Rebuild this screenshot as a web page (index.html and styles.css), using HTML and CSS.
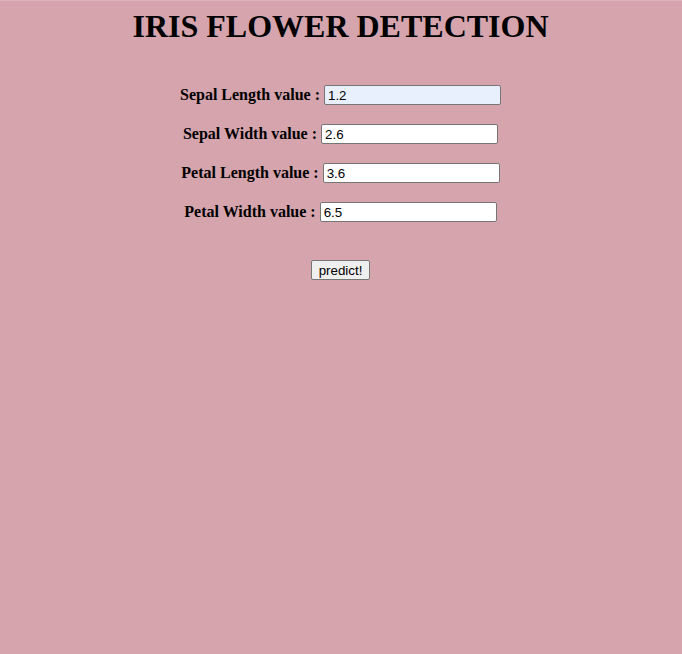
FILE: index.html
```html
<!DOCTYPE html>
<html>
<head>
<meta charset="utf-8">
<title>Iris Flower Detection</title>
<link rel="stylesheet" href="styles.css">
</head>
<body>
<h1 class="title">IRIS FLOWER DETECTION</h1>
<form class="form">
  <div class="row"><label class="label">Sepal Length value :</label><input class="field autofill" type="text" value="1.2"></div>
  <div class="row"><label class="label">Sepal Width value :</label><input class="field" type="text" value="2.6"></div>
  <div class="row"><label class="label">Petal Length value :</label><input class="field" type="text" value="3.6"></div>
  <div class="row"><label class="label">Petal Width value :</label><input class="field" type="text" value="6.5"></div>
  <button class="btn" type="button">predict!</button>
</form>
</body>
</html>
```
FILE: styles.css
```css
html, body {
  margin: 0;
  padding: 0;
  background: #d5a4ad;
  height: 100%;
}
body {
  border-top: 1px solid #dcb3ba;
  padding-top: 7px;
  padding-right: 1px;
  box-sizing: border-box;
  font-family: "Liberation Serif", "Times New Roman", serif;
  color: #000;
}
.title {
  margin: 0;
  text-align: center;
  font-size: 32px;
  font-weight: bold;
  line-height: 37px;
}
.form {
  margin-top: 40px;
  display: flex;
  flex-direction: column;
  align-items: center;
  gap: 19px;
}
.row {
  display: flex;
  align-items: center;
  gap: 4px;
  height: 20px;
}
.label {
  font-size: 16px;
  font-weight: bold;
}
.field {
  box-sizing: border-box;
  width: 177px;
  height: 20px;
  margin: 0;
  padding: 1px 3px;
  border: 1px solid #767676;
  border-radius: 2px;
  background: #fff;
  font-family: "Liberation Sans", Arial, sans-serif;
  font-size: 13.33px;
  color: #000;
}
.autofill {
  background: #e8f0fe;
}
.btn {
  margin-top: 19px;
  box-sizing: border-box;
  width: 59px;
  height: 20px;
  padding: 1px 6px;
  border: 1px solid #767676;
  border-radius: 2px;
  background: #efefef;
  font-family: "Liberation Sans", Arial, sans-serif;
  font-size: 13.33px;
  color: #000;
}
```
